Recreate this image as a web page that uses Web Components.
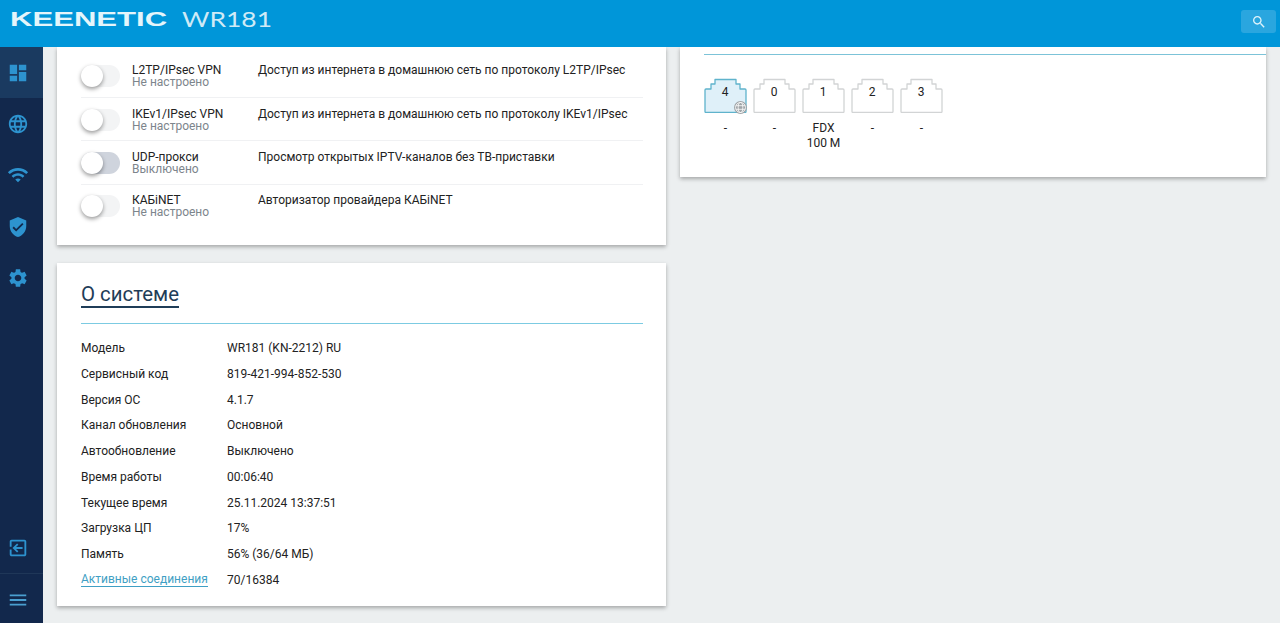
<!DOCTYPE html>
<html lang="ru">
<head>
<meta charset="utf-8">
<title>Keenetic WR181</title>
<style>
html, body { margin: 0; height: 100%; overflow: hidden; background: #eceff0; font-family: Roboto, "Liberation Sans", sans-serif; }
</style>
</head>
<body>
<k-app>
    <k-header slot="header"></k-header>
    <k-sidebar slot="sidebar"></k-sidebar>
    <k-card slot="left">
        <k-service name="L2TP/IPsec VPN" state="Не настроено" text="Доступ из интернета в домашнюю сеть по протоколу L2TP/IPsec"></k-service>
        <k-service name="IKEv1/IPsec VPN" state="Не настроено" text="Доступ из интернета в домашнюю сеть по протоколу IKEv1/IPsec"></k-service>
        <k-service name="UDP-прокси" state="Выключено" text="Просмотр открытых IPTV-каналов без ТВ-приставки" off></k-service>
        <k-service name="КАБiNET" state="Не настроено" text="Авторизатор провайдера КАБiNET" last></k-service>
    </k-card>
    <k-system slot="left">
        <k-info label="Модель" value="WR181 (KN-2212) RU"></k-info>
        <k-info label="Сервисный код" value="819-421-994-852-530"></k-info>
        <k-info label="Версия ОС" value="4.1.7"></k-info>
        <k-info label="Канал обновления" value="Основной"></k-info>
        <k-info label="Автообновление" value="Выключено"></k-info>
        <k-info label="Время работы" value="00:06:40"></k-info>
        <k-info label="Текущее время" value="25.11.2024 13:37:51"></k-info>
        <k-info label="Загрузка ЦП" value="17%"></k-info>
        <k-info label="Память" value="56% (36/64 МБ)"></k-info>
        <k-info label="Активные соединения" value="70/16384" link></k-info>
    </k-system>
    <k-ports slot="right">
        <k-port num="4" wan>-</k-port>
        <k-port num="0">-</k-port>
        <k-port num="1">FDX<br>100 M</k-port>
        <k-port num="2">-</k-port>
        <k-port num="3">-</k-port>
    </k-ports>
</k-app>
<script>
const icons = {
    dashboard: "M3 13h8V3H3v10zm0 8h8v-6H3v6zm10 0h8V11h-8v10zm0-18v6h8V3h-8z",
    globe: "M11.99 2C6.47 2 2 6.48 2 12s4.47 10 9.99 10C17.52 22 22 17.52 22 12S17.52 2 11.99 2zm6.93 6h-2.95c-.32-1.25-.78-2.45-1.38-3.56 1.84.63 3.37 1.91 4.33 3.56zM12 4.04c.83 1.2 1.48 2.53 1.91 3.96h-3.82c.43-1.43 1.08-2.76 1.91-3.96zM4.26 14C4.1 13.36 4 12.69 4 12s.1-1.36.26-2h3.38c-.08.66-.14 1.32-.14 2 0 .68.06 1.34.14 2H4.26zm.82 2h2.95c.32 1.25.78 2.45 1.38 3.56-1.84-.63-3.37-1.9-4.33-3.56zm2.95-8H5.08c.96-1.66 2.49-2.93 4.33-3.56C8.81 5.55 8.35 6.75 8.03 8zM12 19.96c-.83-1.2-1.48-2.53-1.91-3.96h3.82c-.43 1.43-1.08 2.76-1.91 3.96zM14.34 14H9.66c-.09-.66-.16-1.32-.16-2 0-.68.07-1.35.16-2h4.68c.09.65.16 1.32.16 2 0 .68-.07 1.34-.16 2zm.25 5.56c.6-1.11 1.06-2.31 1.38-3.56h2.95c-.96 1.65-2.49 2.93-4.33 3.56zM16.36 14c.08-.66.14-1.32.14-2 0-.68-.06-1.34-.14-2h3.38c.16.64.26 1.31.26 2s-.1 1.36-.26 2h-3.38z",
    wifi: "M1 9l2 2c4.97-4.97 13.03-4.97 18 0l2-2C16.93 2.93 7.08 2.93 1 9zm8 8l3 3 3-3c-1.65-1.66-4.34-1.66-6 0zm-4-4l2 2c2.76-2.76 7.24-2.76 10 0l2-2C15.14 9.14 8.87 9.14 5 13z",
    shield: "M12 1L3 5v6c0 5.55 3.84 10.74 9 12 5.16-1.26 9-6.45 9-12V5l-9-4zm-2 16l-4-4 1.41-1.41L10 14.17l6.59-6.59L18 9l-8 8z",
    gear: "M19.14 12.94c.04-.3.06-.61.06-.94 0-.32-.02-.64-.07-.94l2.03-1.58c.18-.14.23-.41.12-.61l-1.92-3.32c-.12-.22-.37-.29-.59-.22l-2.39.96c-.5-.38-1.03-.7-1.62-.94l-.36-2.54c-.04-.24-.24-.41-.48-.41h-3.84c-.24 0-.43.17-.47.41l-.36 2.54c-.59.24-1.13.57-1.62.94l-2.39-.96c-.22-.08-.47 0-.59.22L2.74 8.87c-.12.21-.08.47.12.61l2.03 1.58c-.05.3-.09.63-.09.94s.02.64.07.94l-2.03 1.58c-.18.14-.23.41-.12.61l1.92 3.32c.12.22.37.29.59.22l2.39-.96c.5.38 1.03.7 1.62.94l.36 2.54c.05.24.24.41.48.41h3.84c.24 0 .44-.17.47-.41l.36-2.54c.59-.24 1.13-.56 1.62-.94l2.39.96c.22.08.47 0 .59-.22l1.92-3.32c.12-.22.07-.47-.12-.61l-2.01-1.58zM12 15.6c-1.98 0-3.6-1.62-3.6-3.6s1.62-3.6 3.6-3.6 3.6 1.62 3.6 3.6-1.62 3.6-3.6 3.6z",
    exit: "M5 3h14c1.1 0 2 .9 2 2v14c0 1.1-.9 2-2 2H5c-1.1 0-2-.9-2-2v-5.5h2V19h14V5H5v5.5H3V5c0-1.1.9-2 2-2zm6 4l1.41 1.41L9.83 11H17v2H9.83l2.58 2.59L11 17l-5-5 5-5z",
    menu: "M3 18h18v-2H3v2zm0-5h18v-2H3v2zm0-7v2h18V6H3z",
    search: "M15.5 14h-.79l-.28-.27C15.41 12.59 16 11.11 16 9.5 16 5.91 13.09 3 9.5 3S3 5.91 3 9.5 5.91 16 9.5 16c1.61 0 3.09-.59 4.23-1.57l.27.28v.79l5 4.99L20.49 19l-4.99-5zm-6 0C7.01 14 5 11.99 5 9.5S7.01 5 9.5 5 14 7.01 14 9.5 11.99 14 9.5 14z"
};
const icon = (name, size) => `<svg width="${size}" height="${size}" viewBox="0 0 24 24" fill="currentColor"><path d="${icons[name]}"/></svg>`;

class Base extends HTMLElement {
    constructor() {
        super();
        this.attachShadow({ mode: "open" });
    }
    connectedCallback() {
        this.shadowRoot.innerHTML = `<style>${this.getStyles()}</style>${this.getTemplate()}`;
    }
}

class KApp extends Base {
    getStyles() {
        return `
        :host { display: grid; grid-template: 47px 1fr / 43px 1fr; height: 623px; overflow: hidden; }
        .top { grid-column: 1 / 3; position: relative; z-index: 2; }
        .main { display: grid; grid-template-columns: 609px 586px; gap: 14px; padding: 0 14px; align-items: start; overflow: hidden; }
        .col { display: flex; flex-direction: column; gap: 18px; }
        `;
    }
    getTemplate() {
        return `
        <div class="top"><slot name="header"></slot></div>
        <slot name="sidebar"></slot>
        <div class="main">
            <div class="col"><slot name="left"></slot></div>
            <div class="col"><slot name="right"></slot></div>
        </div>`;
    }
}

class KHeader extends Base {
    getStyles() {
        return `
        :host { display: flex; align-items: flex-start; justify-content: space-between; height: 47px; background: #0096d9; color: #e4f5fb; padding: 0 0 0 9.5px; box-sizing: border-box; }
        .logo { display: flex; gap: 16px; align-items: center; height: 38px; }
        .brand, .model { display: inline-block; transform-origin: left center; white-space: nowrap; }
        .brand { font: 700 21px/38px "Liberation Sans", sans-serif; width: 156.5px; transform: scaleX(1.48); }
        .model { font: 400 21px/38px Lato, sans-serif; width: 89px; transform: scaleX(1.26); color: #cfeaf6; }
        .search { width: 35px; height: 23px; margin: 10px 4px 0 0; background: #2aa6df; border-radius: 3px; display: flex; align-items: center; justify-content: center; color: #dff3fb; }
        `;
    }
    getTemplate() {
        return `
        <div class="logo"><span class="brand">KEENETIC</span><span class="model">WR181</span></div>
        <div class="search">${icon("search", 16)}</div>`;
    }
}

class KSidebar extends Base {
    getStyles() {
        return `
        :host { display: flex; flex-direction: column; background: #12284c; color: #2d93cf; }
        .item { height: 51.3px; display: flex; align-items: center; justify-content: flex-start; padding-left: 6.5px; }
        .active { background: #1a3a60; }
        .grow { flex: 1; }
        .exit { height: 53px; padding-top: 2px; box-sizing: border-box; border-bottom: 1px solid #1f3758; }
        .menu { height: 49px; color: #4a9fd0; padding-top: 2px; box-sizing: border-box; }
        `;
    }
    getTemplate() {
        return `
        <div class="item active">${icon("dashboard", 22)}</div>
        <div class="item">${icon("globe", 22)}</div>
        <div class="item">${icon("wifi", 22)}</div>
        <div class="item">${icon("shield", 22)}</div>
        <div class="item">${icon("gear", 22)}</div>
        <div class="grow"></div>
        <div class="item exit">${icon("exit", 22)}</div>
        <div class="item menu">${icon("menu", 22)}</div>`;
    }
}

class KCard extends Base {
    getStyles() {
        return `
        :host { display: block; height: 198px; background: #fff; box-shadow: 0 2px 4px rgba(0,0,0,.3); padding: 7.4px 23px 0 24px; box-sizing: border-box; }
        `;
    }
    getTemplate() {
        return `<slot></slot>`;
    }
}

class KService extends Base {
    getStyles() {
        return `
        :host { display: grid; grid-template-columns: 51px 126px 1fr; height: 43.4px; box-sizing: border-box; padding-top: 9.8px; color: #222; font-size: 12px; line-height: 12px; border-bottom: ${this.hasAttribute("last") ? "0" : "1px solid #f0f1f3"}; }
        .track { width: 39px; height: 22px; margin-top: 1px; border-radius: 11px; background: ${this.hasAttribute("off") ? "#cfd4dd" : "#f3f4f5"}; position: relative; }
        .knob { position: absolute; left: 0; top: 0; width: 22px; height: 22px; border-radius: 50%; background: #fff; box-shadow: 0 2px 4px rgba(0,0,0,.4); }
        .state { color: #7d858c; }
        .name, .text { white-space: nowrap; }
        `;
    }
    getTemplate() {
        return `
        <div class="toggle"><div class="track"><div class="knob"></div></div></div>
        <div class="name">${this.getAttribute("name")}<div class="state">${this.getAttribute("state")}</div></div>
        <div class="text">${this.getAttribute("text")}</div>`;
    }
}

class KSystem extends Base {
    getStyles() {
        return `
        :host { display: block; height: 343px; background: #fff; box-shadow: 0 2px 4px rgba(0,0,0,.3); padding: 20px 23px 0 24px; box-sizing: border-box; }
        h2 { margin: 0; font: 400 20.4px/23px Roboto, sans-serif; color: #1f3d58; display: inline-block; border-bottom: 2px solid #1f3d58; }
        .head { height: 40px; }
        .rule { height: 1px; background: #7ccbe2; margin-bottom: 11.2px; }
        `;
    }
    getTemplate() {
        return `<div class="head"><h2>О системе</h2></div><div class="rule"></div><slot></slot>`;
    }
}

class KInfo extends Base {
    getStyles() {
        return `
        :host { display: grid; grid-template-columns: 146px 1fr; height: 25.75px; align-items: center; font-size: 12px; color: #222; }
        .link { color: #3f9fc4; border-bottom: 1px solid #3f9fc4; line-height: 14px; display: inline-block; }
        `;
    }
    getTemplate() {
        const label = this.getAttribute("label");
        return `
        <div>${this.hasAttribute("link") ? `<span class="link">${label}</span>` : label}</div>
        <div>${this.getAttribute("value")}</div>`;
    }
}

class KPorts extends Base {
    getStyles() {
        return `
        :host { display: block; height: 130px; background: #fff; box-shadow: 0 2px 4px rgba(0,0,0,.3); padding-left: 24px; box-sizing: border-box; }
        .line { height: 7px; border-bottom: 1px solid #7cc3d8; margin-bottom: 23px; }
        .ports { display: flex; gap: 6px; }
        `;
    }
    getTemplate() {
        return `<div class="line"></div><div class="ports"><slot></slot></div>`;
    }
}

class KPort extends Base {
    getStyles() {
        const wan = this.hasAttribute("wan");
        return `
        :host { display: block; width: 43px; text-align: center; font-size: 12px; line-height: 15px; color: #222; }
        .jack { position: relative; height: 35px; margin-bottom: 8px; }
        svg { display: block; }
        .num { position: absolute; left: 0; right: 0; top: 6.5px; padding-right: 1px; }
        .wan { position: absolute; right: 0; bottom: -1px; }
        path.out { fill: ${wan ? "#dff0f9" : "#fff"}; stroke: ${wan ? "#5fb3cc" : "#d2d4d5"}; stroke-width: 1.3; stroke-linejoin: round; }
        `;
    }
    getTemplate() {
        const badge = `<svg class="wan" width="13" height="13" viewBox="0 0 13 13" fill="none" stroke="#fff" stroke-width=".8"><circle cx="6.5" cy="6.5" r="6.5" fill="#a0a5a8" stroke="none"/><circle cx="6.500" cy="6.500" r="5"/><ellipse cx="6.500" cy="6.500" rx="2.300" ry="5"/><path d="M2 4.700h9M2 8.300h9"/></svg>`;
        return `
        <div class="jack">
            <svg width="43" height="35" viewBox="0 0 43 35"><path class="out" d="M1 33.500V12a1 1 0 0 1 1-1h5V6h4V1.500h21V6h4v5h5a1 1 0 0 1 1 1v21.500a1 1 0 0 1-1 1H2a1 1 0 0 1-1-1z"/></svg>
            <div class="num">${this.getAttribute("num")}</div>
            ${this.hasAttribute("wan") ? badge : ""}
        </div>
        <slot></slot>`;
    }
}

customElements.define("k-app", KApp);
customElements.define("k-header", KHeader);
customElements.define("k-sidebar", KSidebar);
customElements.define("k-card", KCard);
customElements.define("k-service", KService);
customElements.define("k-system", KSystem);
customElements.define("k-info", KInfo);
customElements.define("k-ports", KPorts);
customElements.define("k-port", KPort);
</script>
</body>
</html>
